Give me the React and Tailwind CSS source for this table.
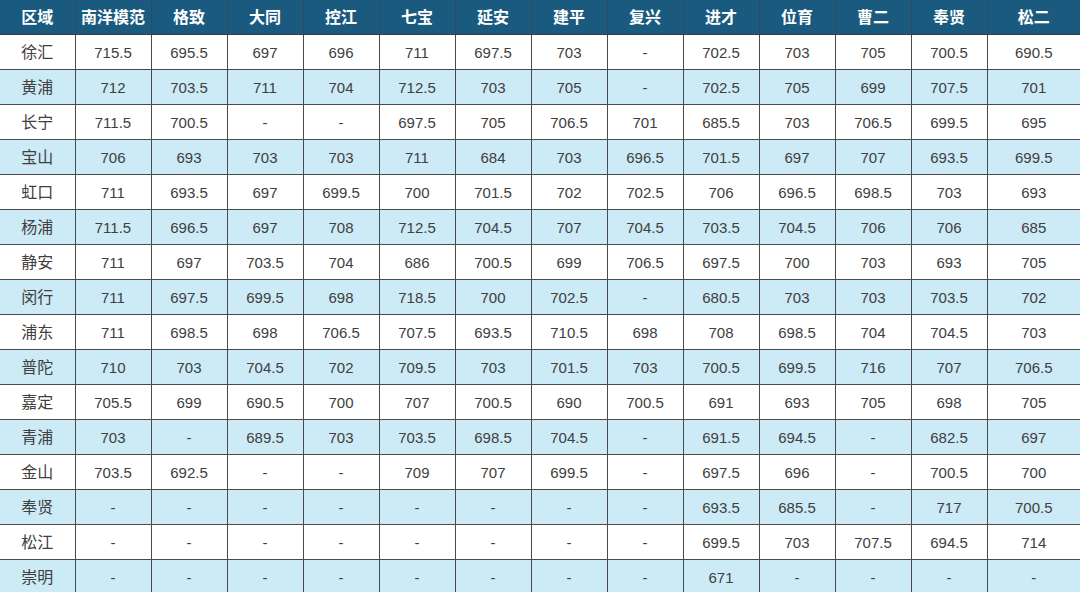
const headers = ["区域", "南洋模范", "格致", "大同", "控江", "七宝", "延安", "建平", "复兴", "进才", "位育", "曹二", "奉贤", "松二"];

const rows = [
  ["徐汇", "715.5", "695.5", "697", "696", "711", "697.5", "703", "-", "702.5", "703", "705", "700.5", "690.5"],
  ["黄浦", "712", "703.5", "711", "704", "712.5", "703", "705", "-", "702.5", "705", "699", "707.5", "701"],
  ["长宁", "711.5", "700.5", "-", "-", "697.5", "705", "706.5", "701", "685.5", "703", "706.5", "699.5", "695"],
  ["宝山", "706", "693", "703", "703", "711", "684", "703", "696.5", "701.5", "697", "707", "693.5", "699.5"],
  ["虹口", "711", "693.5", "697", "699.5", "700", "701.5", "702", "702.5", "706", "696.5", "698.5", "703", "693"],
  ["杨浦", "711.5", "696.5", "697", "708", "712.5", "704.5", "707", "704.5", "703.5", "704.5", "706", "706", "685"],
  ["静安", "711", "697", "703.5", "704", "686", "700.5", "699", "706.5", "697.5", "700", "703", "693", "705"],
  ["闵行", "711", "697.5", "699.5", "698", "718.5", "700", "702.5", "-", "680.5", "703", "703", "703.5", "702"],
  ["浦东", "711", "698.5", "698", "706.5", "707.5", "693.5", "710.5", "698", "708", "698.5", "704", "704.5", "703"],
  ["普陀", "710", "703", "704.5", "702", "709.5", "703", "701.5", "703", "700.5", "699.5", "716", "707", "706.5"],
  ["嘉定", "705.5", "699", "690.5", "700", "707", "700.5", "690", "700.5", "691", "693", "705", "698", "705"],
  ["青浦", "703", "-", "689.5", "703", "703.5", "698.5", "704.5", "-", "691.5", "694.5", "-", "682.5", "697"],
  ["金山", "703.5", "692.5", "-", "-", "709", "707", "699.5", "-", "697.5", "696", "-", "700.5", "700"],
  ["奉贤", "-", "-", "-", "-", "-", "-", "-", "-", "693.5", "685.5", "-", "717", "700.5"],
  ["松江", "-", "-", "-", "-", "-", "-", "-", "-", "699.5", "703", "707.5", "694.5", "714"],
  ["崇明", "-", "-", "-", "-", "-", "-", "-", "-", "671", "-", "-", "-", "-"],
];

export default function App() {
  return (
    <div className="h-[592px] w-[1080px] overflow-hidden bg-white font-['Liberation_Sans','Noto_Sans_CJK_SC',sans-serif]">
      <table className="w-[1080px] table-fixed border-collapse text-center">
        <colgroup>
          <col className="w-[75px]" />
          {headers.slice(1, 13).map((h) => (
            <col key={h} className="w-[76px]" />
          ))}
          <col className="w-[93px]" />
        </colgroup>
        <thead>
          <tr className="h-[34px] bg-[#1a5a7e] text-[16px] font-bold text-white">
            {headers.map((h, i) => (
              <th
                key={h}
                className={`border-b border-[#3c3c3c] p-0 pt-[2px] font-bold ${i > 0 ? "border-l border-l-[#2c4a5e]" : ""}`}
              >
                {h}
              </th>
            ))}
          </tr>
        </thead>
        <tbody>
          {rows.map((row, r) => (
            <tr key={row[0]} className={`h-[35px] ${r % 2 === 1 ? "bg-[#cdeaf7]" : "bg-white"}`}>
              {row.map((v, i) => (
                <td
                  key={i}
                  className={`border-b border-[#4a4a4a] p-0 pt-[3px] text-[#404040] ${i > 0 ? "border-l border-l-[#4a4a4a] text-[15px]" : "text-[16px]"}`}
                >
                  {v}
                </td>
              ))}
            </tr>
          ))}
        </tbody>
      </table>
    </div>
  );
}
